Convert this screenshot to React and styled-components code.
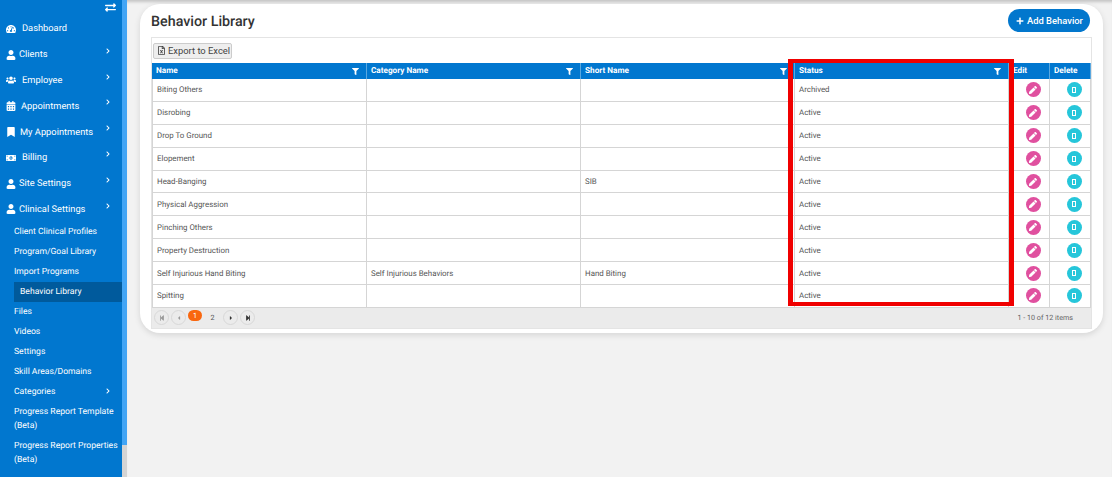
import React from "react";
import styled, { createGlobalStyle } from "styled-components";
import {
  FaTachometerAlt,
  FaUser,
  FaUsers,
  FaCalendarAlt,
  FaBookmark,
  FaMoneyBillAlt,
  FaExchangeAlt,
  FaFilter,
  FaPlus,
  FaPen,
  FaRegFileExcel,
  FaChevronRight,
  FaStepBackward,
  FaStepForward,
  FaCaretLeft,
  FaCaretRight,
} from "react-icons/fa";

const mainItems = [
  { label: "Dashboard", icon: FaTachometerAlt, gap: 6 },
  { label: "Clients", icon: FaUser, gap: 3, arrow: true },
  { label: "Employee", icon: FaUsers, gap: 6, arrow: true },
  { label: "Appointments", icon: FaCalendarAlt, gap: 5, arrow: true },
  { label: "My Appointments", icon: FaBookmark, gap: 4, arrow: true },
  { label: "Billing", icon: FaMoneyBillAlt, gap: 6, arrow: true },
  { label: "Site Settings", icon: FaUser, gap: 3, arrow: true },
  { label: "Clinical Settings", icon: FaUser, gap: 3, arrow: true },
];

const subItems = [
  { label: "Client Clinical Profiles" },
  { label: "Program/Goal Library" },
  { label: "Import Programs" },
  { label: "Behavior Library", active: true },
  { label: "Files" },
  { label: "Videos" },
  { label: "Settings" },
  { label: "Skill Areas/Domains" },
  { label: "Categories", arrow: true },
  { label: "Progress Report Template (Beta)" },
  { label: "Progress Report Properties (Beta)" },
];

const rows = [
  ["Biting Others", "", "", "Archived"],
  ["Disrobing", "", "", "Active"],
  ["Drop To Ground", "", "", "Active"],
  ["Elopement", "", "", "Active"],
  ["Head-Banging", "", "SIB", "Active"],
  ["Physical Aggression", "", "", "Active"],
  ["Pinching Others", "", "", "Active"],
  ["Property Destruction", "", "", "Active"],
  ["Self Injurious Hand Biting", "Self Injurious Behaviors", "Hand Biting", "Active"],
  ["Spitting", "", "", "Active"],
];

const GlobalStyle = createGlobalStyle`
  html, body {
    margin: 0;
    height: 100%;
    overflow: hidden;
    background: #f2f2f2;
    font-family: Roboto, "Open Sans", sans-serif;
    text-rendering: geometricPrecision;
  }
  * { box-sizing: border-box; }
`;

const Page = styled.div`
  display: flex;
  height: 477px;
  overflow: hidden;
`;

const Sidebar = styled.nav`
  width: 122px;
  height: 477px;
  flex-shrink: 0;
  overflow: hidden;
  background: #0177cf;
  color: #fff;
`;

const ScrollTrack = styled.div`
  width: 5px;
  flex-shrink: 0;
  background: #d4d4d4;
`;

const ScrollThumb = styled.div`
  height: 445px;
  background: #42a5f5;
`;

const ToggleRow = styled.div`
  height: 16px;
  padding: 0 6px 2px 0;
  display: flex;
  justify-content: flex-end;
  align-items: center;
  font-size: 11px;
`;

const MainItem = styled.div`
  height: 25.8px;
  display: flex;
  align-items: center;
  padding: 0 10px 0 6px;
  font-size: 9.3px;
  white-space: nowrap;
  position: relative;
  svg { font-size: 10px; flex-shrink: 0; }
`;

const MainLabel = styled.span`
  margin-left: ${(p) => p.$gap}px;
`;

const Arrow = styled(FaChevronRight)`
  position: absolute;
  right: 11px;
  top: 6px;
  && { font-size: 6px; }
`;

const SubItem = styled.div`
  position: relative;
  margin-left: 14px;
  padding: 3px 0 3px ${(p) => (p.$active ? 6 : 0)}px;
  min-height: 19.85px;
  font-size: 8.6px;
  line-height: 14px;
  background: ${(p) => (p.$active ? "#005a9c" : "transparent")};
`;

const Main = styled.main`
  flex: 1;
  min-width: 0;
  height: 477px;
  padding: 4px 8px 0 13px;
  box-shadow: inset 0 4px 3px -2px #c4c4c4;
`;

const Card = styled.section`
  position: relative;
  width: 963px;
  height: 329px;
  padding: 5px 11px 0 11px;
  background: #fff;
  border-radius: 20px;
  box-shadow: 0 2px 6px rgba(0, 0, 0, 0.12);
`;

const CardHeader = styled.header`
  display: flex;
  justify-content: space-between;
  align-items: center;
  height: 23px;
  margin-bottom: 5px;
`;

const Title = styled.h1`
  margin: 0;
  padding-top: 2px;
  font-size: 14.3px;
  font-weight: 500;
  color: #333;
`;

const AddButton = styled.button`
  display: flex;
  align-items: center;
  gap: 3px;
  height: 23px;
  width: 82px;
  margin-right: 2px;
  padding: 0 0 0 8px;
  border: 0;
  border-radius: 12px;
  background: #0277cd;
  color: #fff;
  font: 500 9.4px Roboto, sans-serif;
  white-space: nowrap;
  svg { font-size: 8px; flex-shrink: 0; }
`;

const Grid = styled.div`
  border: 1px solid #e4e4e4;
  width: 941px;
`;

const Toolbar = styled.div`
  height: 25px;
  display: flex;
  align-items: center;
  padding-left: 1px;
`;

const ExportButton = styled.button`
  display: flex;
  align-items: center;
  gap: 2px;
  height: 16px;
  width: 79px;
  padding: 0 0 0 3px;
  border: 1px solid #ccc;
  border-radius: 2px;
  background: #eee;
  color: #444;
  font: 9.4px Roboto, sans-serif;
  white-space: nowrap;
  svg { font-size: 9px; flex-shrink: 0; }
`;

const Table = styled.div`
  display: grid;
  grid-template-columns: 215px 214px 214px 214px 41px 41px;
`;

const HeadCell = styled.div`
  height: 16px;
  display: flex;
  justify-content: space-between;
  align-items: center;
  padding: 0 7px 0 4px;
  background: #0177cf;
  border-right: 1px solid #5aa8e0;
  color: #fff;
  font-size: 8.2px;
  font-weight: 700;
  white-space: nowrap;
  svg { font-size: 7px; }
`;

const Cell = styled.div`
  height: 22.9px;
  display: flex;
  align-items: center;
  padding: 0 4px;
  border-right: 1px solid #d5d5d5;
  border-bottom: 1px solid #d5d5d5;
  border-left: ${(p) => (p.$first ? "1px solid #d5d5d5" : "0")};
  color: #555;
  font-size: 7.9px;
  white-space: nowrap;
`;

const ActionCell = styled(Cell)`
  justify-content: center;
  padding: 0 0 0 8px;
`;

const RoundIcon = styled.span`
  width: 15px;
  height: 15px;
  border-radius: 50%;
  display: flex;
  align-items: center;
  justify-content: center;
  color: #fff;
  background: ${(p) => p.$color};
  svg { font-size: 8px; }
`;

const TrashGlyph = styled.span`
  width: 4px;
  height: 6px;
  border: 1px solid #fff;
`;

const Pager = styled.div`
  height: 20px;
  display: flex;
  align-items: center;
  justify-content: space-between;
  padding: 0 18px 0 2px;
  background: #ebebeb;
  color: #666;
  font-size: 7.2px;
`;

const PagerLeft = styled.div`
  display: flex;
  align-items: center;
  gap: 2px;
`;

const PageArrow = styled.span`
  width: 15px;
  height: 15px;
  border: 1px solid #d8d8d8;
  border-radius: 50%;
  display: flex;
  align-items: center;
  justify-content: center;
  color: ${(p) => (p.$off ? "#999" : "#333")};
  svg { font-size: 6px; }
`;

const CurrentPage = styled.span`
  width: 14px;
  height: 11px;
  margin: -5px 0 0 0;
  border-radius: 6px;
  background: #f9670f;
  color: #fff;
  text-align: center;
  line-height: 11px;
`;

const PageNumber = styled.span`
  width: 17px;
  text-align: center;
  color: #555;
`;

const Highlight = styled.div`
  position: absolute;
  left: 648px;
  top: 55px;
  width: 226px;
  height: 247px;
  border: 5px solid #f00000;
  border-width: 4px 5px;
  pointer-events: none;
`;

function App() {
  return (
    <Page>
      <GlobalStyle />
      <Sidebar>
        <ToggleRow>
          <FaExchangeAlt />
        </ToggleRow>
        {mainItems.map((item) => (
          <MainItem key={item.label}>
            <item.icon />
            <MainLabel $gap={item.gap}>{item.label}</MainLabel>
            {item.arrow && <Arrow />}
          </MainItem>
        ))}
        {subItems.map((item) => (
          <SubItem key={item.label} $active={item.active}>
            {item.label}
            {item.arrow && <Arrow />}
          </SubItem>
        ))}
        {/* next menu entry, cut off by the window edge */}
        <MainItem>
          <FaUser />
        </MainItem>
      </Sidebar>
      <ScrollTrack>
        <ScrollThumb />
      </ScrollTrack>
      <Main>
        <Card>
          <CardHeader>
            <Title>Behavior Library</Title>
            <AddButton>
              <FaPlus /> Add Behavior
            </AddButton>
          </CardHeader>
          <Grid>
            <Toolbar>
              <ExportButton>
                <FaRegFileExcel /> Export to Excel
              </ExportButton>
            </Toolbar>
            <Table>
              {["Name", "Category Name", "Short Name", "Status"].map((name) => (
                <HeadCell key={name}>
                  {name}
                  <FaFilter />
                </HeadCell>
              ))}
              <HeadCell>Edit</HeadCell>
              <HeadCell>Delete</HeadCell>
              {rows.map((row) => (
                <React.Fragment key={row[0]}>
                  {row.map((text, i) => (
                    <Cell key={i} $first={i === 0}>
                      {text}
                    </Cell>
                  ))}
                  <ActionCell>
                    <RoundIcon $color="#e0509f">
                      <FaPen />
                    </RoundIcon>
                  </ActionCell>
                  <ActionCell>
                    <RoundIcon $color="#26c6da">
                      <TrashGlyph />
                    </RoundIcon>
                  </ActionCell>
                </React.Fragment>
              ))}
            </Table>
            <Pager>
              <PagerLeft>
                <PageArrow $off>
                  <FaStepBackward />
                </PageArrow>
                <PageArrow $off>
                  <FaCaretLeft />
                </PageArrow>
                <CurrentPage>1</CurrentPage>
                <PageNumber>2</PageNumber>
                <PageArrow>
                  <FaCaretRight />
                </PageArrow>
                <PageArrow>
                  <FaStepForward />
                </PageArrow>
              </PagerLeft>
              <span>1 - 10 of 12 items</span>
            </Pager>
          </Grid>
          <Highlight />
        </Card>
      </Main>
    </Page>
  );
}

export default App;
